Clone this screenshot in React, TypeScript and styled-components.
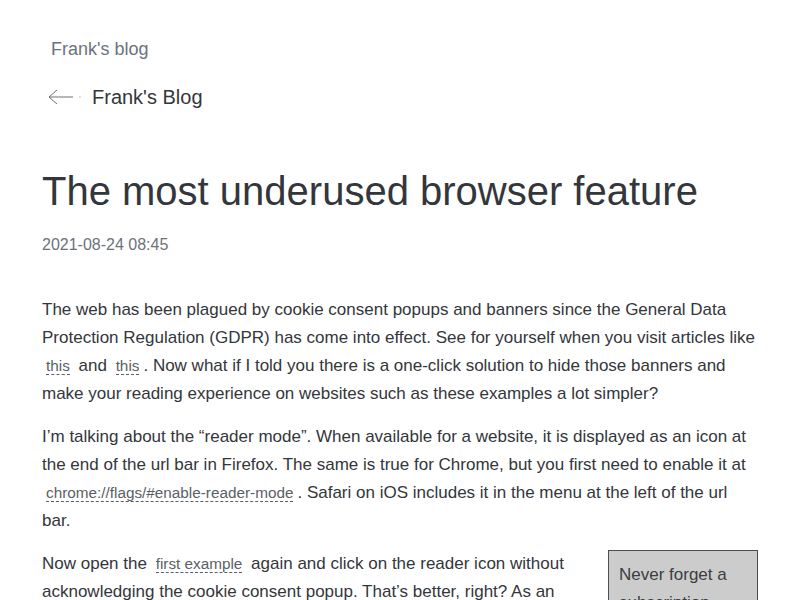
import React from "react";
import styled, { createGlobalStyle } from "styled-components";

const Global = createGlobalStyle`
  html, body { margin: 0; padding: 0; background: #fff; }
  body { font-family: "Liberation Sans", Arial, sans-serif; color: #33363b; }
`;

const Page = styled.div`
  padding: 0 42px;
  overflow: hidden;
  height: 600px;
`;

const SiteName = styled.div`
  padding: 38px 0 0 9px;
  font-size: 18px;
  line-height: 22px;
  color: #6b727b;
`;

const BackRow = styled.div`
  display: flex;
  align-items: center;
  margin-top: 25px;
  padding-left: 4px;
  gap: 10px;
`;

const BackLabel = styled.span`
  font-size: 20px;
  line-height: 24px;
  color: #33363b;
`;

const Title = styled.h1`
  margin: 57px 0 0;
  font-size: 40px;
  line-height: 50px;
  font-weight: 400;
  color: #33363b;
`;

const DateLine = styled.div`
  margin-top: 19px;
  font-size: 16px;
  line-height: 20px;
  color: #6b727b;
`;

const Body = styled.div`
  margin-top: 41px;
`;

const P = styled.p`
  margin: 0 0 15px;
  font-size: 17px;
  line-height: 28px;
  color: #33363b;
`;

const Link = styled.a`
  margin: 0 4px;
  font-size: 0.9em;
  color: #5a5f66;
  text-decoration: none;
  border-bottom: 1px dashed #5a5f66;
`;

const Aside = styled.div`
  float: right;
  width: 128px;
  margin: 0 0 10px 40px;
  padding: 10px;
  background: #cccccc;
  border: 1px solid #4a4d52;
  font-size: 17px;
  line-height: 28px;
  color: #3a3d42;
`;

const Arrow = () => (
  <svg width="36" height="20" viewBox="0 0 36 20" fill="none">
    <path d="M3 10 H27 M3 10 L11 3 M3 10 L11 17" stroke="#6b6f75" strokeWidth="1" />
    <circle cx="34" cy="10" r="0.8" fill="#bbb" />
  </svg>
);

export default function App() {
  return (
    <>
      <Global />
      <Page>
        <SiteName>Frank's blog</SiteName>
        <BackRow>
          <Arrow />
          <BackLabel>Frank's Blog</BackLabel>
        </BackRow>
        <Title>The most underused browser feature</Title>
        <DateLine>2021-08-24 08:45</DateLine>
        <Body>
          <P>
            The web has been plagued by cookie consent popups and banners since the General Data
            Protection Regulation (GDPR) has come into effect. See for yourself when you visit articles like{" "}
            <Link href="#">this</Link> and <Link href="#">this</Link>. Now what if I told you there is a
            one-click solution to hide those banners and make your reading experience on websites such as
            these examples a lot simpler?
          </P>
          <P>
            I’m talking about the “reader mode”. When available for a website, it is displayed as an icon at
            the end of the url bar in Firefox. The same is true for Chrome, but you first need to enable it at{" "}
            <Link href="#">chrome://flags/#enable-reader-mode</Link>. Safari on iOS includes it in the menu
            at the left of the url bar.
          </P>
          <Aside>Never forget a subscription</Aside>
          <P>
            Now open the <Link href="#">first example</Link> again and click on the reader icon without
            acknowledging the cookie consent popup. That’s better, right? As an
          </P>
        </Body>
      </Page>
    </>
  );
}
